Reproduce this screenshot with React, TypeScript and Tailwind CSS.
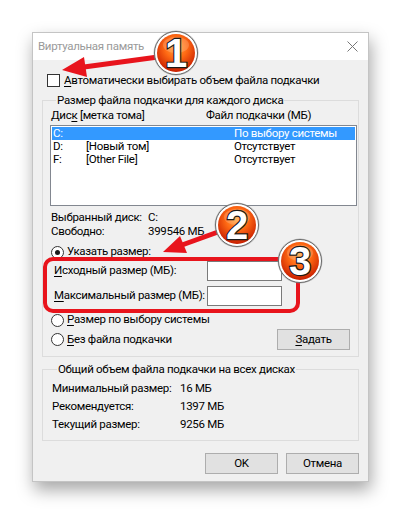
import React from "react";

const U = ({ c }: { c: string }) => (
  <span className="underline underline-offset-[2px] decoration-[1px]">{c}</span>
);

function Check() {
  return <div className="w-[13px] h-[13px] border border-[#333] bg-white shrink-0" />;
}

function Radio({ on }: { on?: boolean }) {
  return (
    <div className="w-[13px] h-[13px] rounded-full border border-[#333] bg-white shrink-0 flex items-center justify-center">
      {on && <div className="w-[5px] h-[5px] rounded-full bg-[#1a1a1a]" />}
    </div>
  );
}

function Badge({ cx, cy, n, id }: { cx: number; cy: number; n: string; id: string }) {
  return (
    <g>
      <circle cx={cx} cy={cy} r={22.5} fill="#8a8a8a" opacity={0.5} />
      <circle cx={cx} cy={cy} r={21.5} fill="#ffffff" stroke="#6a6a6a" strokeWidth={1} />
      <circle cx={cx} cy={cy} r={19} fill={`url(#${id})`} />
      <ellipse cx={cx} cy={cy - 8} rx={13} ry={8} fill="#ffffff" opacity={0.18} />
      <text
        x={cx}
        y={cy + 14}
        textAnchor="middle"
        fontFamily="'Liberation Sans', Arial, sans-serif"
        fontWeight={700}
        fontSize={40}
        fill="#ffffff"
        stroke="#1a1a1a"
        strokeWidth={2.4}
        paintOrder="stroke"
      >
        {n}
      </text>
    </g>
  );
}

export default function App() {
  return (
    <div className="w-[401px] h-[515px] bg-white relative overflow-hidden pl-[32px] pt-[32px] font-[Roboto,sans-serif] text-[11.5px] tracking-[-0.3px] text-black leading-none whitespace-nowrap">
      <div className="w-[337px] h-[450px] bg-[#f0f0f0] border border-[#c4c4c4] shadow-[2px_8px_16px_rgba(0,0,0,0.35)] flex flex-col">
        {/* Title bar */}
        <div className="h-[27px] bg-white flex items-center justify-between pl-[5px] pr-[10px] shrink-0">
          <span className="text-[#9a9a9a]">Виртуальная память</span>
          <svg width="11" height="11" viewBox="0 0 11 11">
            <path d="M0.5 0.5 L10.5 10.5 M10.5 0.5 L0.5 10.5" stroke="#777" strokeWidth="1" />
          </svg>
        </div>

        {/* Body */}
        <div className="flex-1 flex flex-col pl-[9px] pr-[9px]">
          <div className="flex items-center h-[13px] mt-[14px] ml-[5px] gap-[4px]">
            <Check />
            <span>
              <U c="А" />
              втоматически выбирать объем файла подкачки
            </span>
          </div>

          {/* Group 1 */}
          <fieldset className="w-[317px] min-w-0 border border-[#dcdcdc] mt-[5px] pl-[8px] pr-[1px] pb-[6px]">
            <legend className="ml-[5px] px-[1px] leading-[16px]">Размер файла подкачки для каждого диска</legend>
            <div className="flex items-center h-[16px]">
              <span className="w-[155px] shrink-0">
                Дис<U c="к" /> [метка тома]
              </span>
              <span>Файл подкачки (МБ)</span>
            </div>
            <div className="mt-[1px] ml-[-1px] w-[307px] h-[81px] border border-[#828790] bg-white pt-[1px] pl-[1px] pr-[1px]">
              <div className="flex items-center h-[13px] bg-[#3399ff] text-white pl-[1px]">
                <span className="w-[33px] shrink-0">C:</span>
                <span className="w-[148px] shrink-0"></span>
                <span>По выбору системы</span>
              </div>
              <div className="flex items-center h-[13px] pl-[1px]">
                <span className="w-[33px] shrink-0">D:</span>
                <span className="w-[148px] shrink-0">[Новый том]</span>
                <span>Отсутствует</span>
              </div>
              <div className="flex items-center h-[13px] pl-[1px]">
                <span className="w-[33px] shrink-0">F:</span>
                <span className="w-[148px] shrink-0">[Other File]</span>
                <span>Отсутствует</span>
              </div>
            </div>

            <div className="flex items-center h-[14px] mt-[5px]">
              <span className="w-[97px] shrink-0">Выбранный диск:</span>
              <span>C:</span>
            </div>
            <div className="flex items-center h-[14px]">
              <span className="w-[97px] shrink-0">Свободно:</span>
              <span>399546 МБ</span>
            </div>

            <div className="flex items-center h-[14px] mt-[6px] gap-[3px]">
              <Radio on />
              <span>
                <U c="У" />
                казать размер:
              </span>
            </div>
            <div className="flex items-center h-[20px] mt-[2px] pl-[3px]">
              <span className="w-[153px] shrink-0">
                <U c="И" />
                сходный размер (МБ):
              </span>
              <div className="w-[75px] h-[20px] bg-white border border-[#7a7a7a] shrink-0" />
            </div>
            <div className="flex items-center h-[20px] mt-[5px] pl-[3px]">
              <span className="w-[153px] shrink-0">
                <U c="М" />
                аксимальный размер (МБ):
              </span>
              <div className="w-[75px] h-[20px] bg-white border border-[#7a7a7a] shrink-0" />
            </div>
            <div className="flex items-center h-[14px] mt-[7px] gap-[3px]">
              <Radio />
              <span>
                <U c="Р" />
                азмер по выбору системы
              </span>
            </div>
            <div className="flex items-center justify-between h-[21px] mt-[2px] pr-[7px]">
              <div className="flex items-center gap-[3px]">
                <Radio />
                <span>
                  <U c="Б" />
                  ез файла подкачки
                </span>
              </div>
              <div className="w-[73px] h-[21px] bg-[#e1e1e1] border border-[#adadad] flex items-center justify-center shrink-0">
                <span>
                  <U c="З" />
                  адать
                </span>
              </div>
            </div>
          </fieldset>

          {/* Group 2 */}
          <fieldset className="w-[317px] min-w-0 border border-[#dcdcdc] mt-[4px] pl-[9px] pb-[6px]">
            <legend className="ml-[5px] px-[1px] leading-[16px]">Общий объем файла подкачки на всех дисках</legend>
            <div className="flex items-center h-[18px] mt-[3px]">
              <span className="w-[128px] shrink-0">Минимальный размер:</span>
              <span>16 МБ</span>
            </div>
            <div className="flex items-center h-[18px]">
              <span className="w-[128px] shrink-0">Рекомендуется:</span>
              <span>1397 МБ</span>
            </div>
            <div className="flex items-center h-[18px]">
              <span className="w-[128px] shrink-0">Текущий размер:</span>
              <span>9256 МБ</span>
            </div>
          </fieldset>

          <div className="flex justify-end gap-[8px] mt-[12px]">
            <div className="w-[73px] h-[21px] bg-[#e1e1e1] border border-[#adadad] flex items-center justify-center">OK</div>
            <div className="w-[73px] h-[21px] bg-[#e1e1e1] border border-[#adadad] flex items-center justify-center">Отмена</div>
          </div>
        </div>
      </div>

      {/* Annotations overlay */}
      <svg className="absolute left-0 top-0 pointer-events-none" width="401" height="515" viewBox="0 0 401 515">
        <defs>
          {["g1", "g2", "g3"].map((id) => (
            <radialGradient key={id} id={id} cx="50%" cy="35%" r="65%">
              <stop offset="0%" stopColor="#ffa640" />
              <stop offset="45%" stopColor="#ff6a14" />
              <stop offset="100%" stopColor="#c81e00" />
            </radialGradient>
          ))}
        </defs>
        <rect x={45} y={259} width={253} height={52} rx={8} fill="none" stroke="#e8141c" strokeWidth={4} />
        <line x1={158} y1={57} x2={84} y2={67} stroke="#e8141c" strokeWidth={5} />
        <polygon points="62,70 87,77 84,57" fill="#e8141c" />
        <line x1={218} y1={232} x2={182} y2={245} stroke="#e8141c" strokeWidth={5} />
        <polygon points="163,252 187,253 180,236" fill="#e8141c" />
        <Badge cx={176} cy={53} n="1" id="g1" />
        <Badge cx={237} cy={225} n="2" id="g2" />
        <Badge cx={300} cy={261} n="3" id="g3" />
      </svg>
    </div>
  );
}
